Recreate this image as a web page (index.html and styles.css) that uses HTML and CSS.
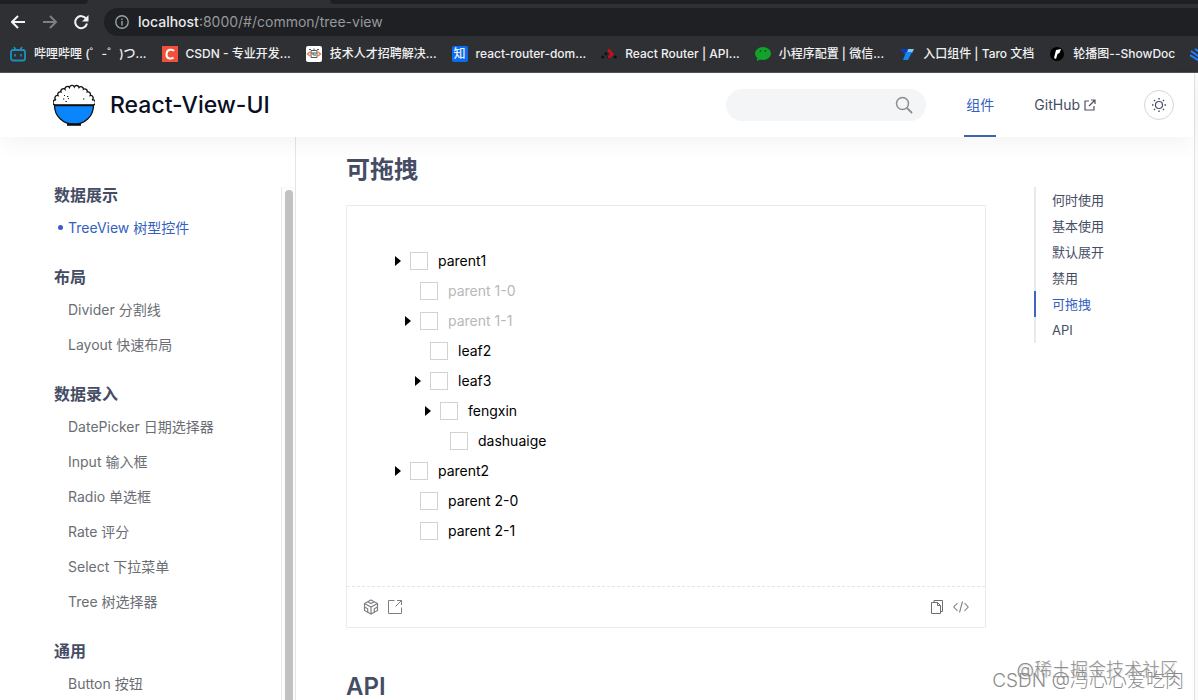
FILE: index.html
```html
<!DOCTYPE html>
<html lang="zh-CN">
<head>
<meta charset="utf-8">
<title>React-View-UI</title>
<link rel="stylesheet" href="styles.css">
</head>
<body>
<div class="browser">
  <div class="tab-edge"><span class="tab-left"></span><span class="tab-right"></span></div>
  <div class="toolbar">
    <button class="tool" aria-label="Back"><svg width="16" height="16" viewBox="0 0 16 16"><path d="M14 8H1M7 2L1 8l6 6" stroke="#f1f3f4" stroke-width="2" fill="none"/></svg></button>
    <button class="tool" aria-label="Forward"><svg width="16" height="16" viewBox="0 0 16 16"><path d="M1 8h13M8 2l6 6-6 6" stroke="#7d7f82" stroke-width="2" fill="none"/></svg></button>
    <button class="tool" aria-label="Reload"><svg width="16" height="16" viewBox="0 0 16 16"><path d="M13.3 5A6 6 0 1 0 14 9.5" stroke="#f1f3f4" stroke-width="2" fill="none"/><path d="M15.500 1v6.500H9z" fill="#f1f3f4"/></svg></button>
    <div class="address">
      <svg width="14" height="14" viewBox="0 0 14 14"><circle cx="7" cy="7" r="6.2" stroke="#9aa0a6" stroke-width="1.4" fill="none"/><path d="M7 6v4.4M7 3.4v1.5" stroke="#9aa0a6" stroke-width="1.4"/></svg>
      <span class="url"><b>localhost</b>:8000/#/common/tree-view</span>
    </div>
  </div>
  <nav class="bookmarks">
    <a href="#"><svg width="16" height="16" viewBox="0 0 16 16"><rect x="1" y="4" width="14" height="10.5" rx="2" fill="none" stroke="#1c8fbe" stroke-width="1.8"/><path d="M4 1l2 3M12 1l-2 3M5 8v2.5M11 8v2.5" stroke="#1c8fbe" stroke-width="1.6"/></svg><span>哔哩哔哩 (゜-゜)つ...</span></a>
    <a href="#"><svg width="16" height="16" viewBox="0 0 16 16"><rect width="16" height="16" fill="#f1503a"/><path d="M12 5C10.800 3.300 5 2.300 4.500 8c-.4 5.300 4.500 5.200 7 3.500" stroke="#fff" stroke-width="2" fill="none"/></svg><span>CSDN - 专业开发...</span></a>
    <a href="#"><svg width="16" height="16" viewBox="0 0 16 16"><rect width="16" height="16" rx="2" fill="#fff"/><path d="M5 4.500h6v7H5zM5 7h6M7 7v2h3M3 3.500h2M11 3.500h2M8 2.500v2" stroke="#555" fill="none"/><path d="M4 6L1.500 8 4 10M12 6l2.500 2L12 10" stroke="#ee7f45" stroke-width="1.500" fill="none"/></svg><span>技术人才招聘解决...</span></a>
    <a href="#"><span class="zhi">知</span><span>react-router-dom...</span></a>
    <a href="#"><svg width="16" height="16" viewBox="0 0 16 16"><g fill="#111"><circle cx="1.800" cy="11" r="1.600"/><circle cx="5" cy="7.800" r="1.600"/><circle cx="14.200" cy="11" r="1.600"/><circle cx="8" cy="11" r="1.600"/></g><path d="M8 4.500l3 3.500-2.500 3" stroke="#c5101c" stroke-width="3" stroke-linecap="round" fill="none"/></svg><span>React Router | API...</span></a>
    <a href="#"><svg width="16" height="16" viewBox="0 0 16 16"><ellipse cx="8" cy="7.500" rx="8" ry="6.500" fill="#12a32a"/><path d="M2 12v3l4-2z" fill="#12a32a"/><circle cx="5.500" cy="5" r=".9" fill="#075c16"/><circle cx="10.500" cy="5" r=".9" fill="#075c16"/></svg><span>小程序配置 | 微信...</span></a>
    <a href="#"><svg width="16" height="16" viewBox="0 0 16 16"><path d="M1 3h7l1 6H6z" fill="#0b3db8"/><path d="M9 3h6l-2 4H8z" fill="#7cc8fb"/><path d="M7 6h6L9 14H4z" fill="#1687ee"/></svg><span>入口组件 | Taro 文档</span></a>
    <a href="#"><svg width="16" height="16" viewBox="0 0 16 16"><circle cx="8" cy="8" r="7" fill="#000"/><path d="M7 4l5-1-1.500 4-2 1-1.500 5-2-1 1-4z" fill="#fff"/></svg><span>轮播图--ShowDoc</span></a>
    <a href="#" aria-label="掘金"><svg width="16" height="16" viewBox="0 0 16 16"><path d="M0 9l8 5 8-5M1 5l7 5 7-5M5 3l3 2 3-2" stroke="#1e80ff" stroke-width="2" fill="none"/></svg></a>
  </nav>
</div>

<div class="viewport">
  <div class="site">
    <header class="site-header">
      <a class="brand" href="#">
        <svg width="42" height="42" viewBox="0 0 42 42"><path d="M2 21a2.500 2.500 0 0 1 1-5 2.500 2.500 0 0 1 2-4.500 2.500 2.500 0 0 1 3-3.500 2.500 2.500 0 0 1 4-2.700 2.500 2.500 0 0 1 4.500-1.800 2.500 2.500 0 0 1 4.800-.6 2.500 2.500 0 0 1 4.700.6 2.500 2.500 0 0 1 4.400 1.800 2.500 2.500 0 0 1 3.800 2.700 2.500 2.500 0 0 1 3 3.500 2.500 2.500 0 0 1 1.900 4.500 2.500 2.500 0 0 1 1.400 5z" fill="#fff" stroke="#111" stroke-width="1.300"/><path d="M1.500 21.500h39C40.500 32 32 40.300 21 40.300S1.500 32 1.500 21.500z" fill="#0a85fb" stroke="#111" stroke-width="1.300"/><path d="M14 40.500h14" stroke="#111" stroke-width="2.600"/><path d="M10 15h1.300M14 12.500h1.300M12.500 17.500h1.300M30 15h1.300M11 11.500h1M15 14.500h1" stroke="#111" stroke-width="1.100"/></svg>
        <span>React-View-UI</span>
      </a>
      <div class="header-tools">
        <label class="search"><input type="text" aria-label="搜索"><svg width="18" height="18" viewBox="0 0 18 18"><circle cx="7.500" cy="7.500" r="6" stroke="#8b8e92" stroke-width="1.500" fill="none"/><path d="M12 12l5 5" stroke="#8b8e92" stroke-width="1.800"/></svg></label>
        <nav class="main-nav">
          <a class="active" href="#">组件</a>
          <a href="#">GitHub<svg width="12" height="12" viewBox="0 0 12 12"><path d="M5 2H1v9h9V7M7 1h4v4M11 1L5 7" stroke="#4d5164" stroke-width="1.200" fill="none"/></svg></a>
        </nav>
        <button class="theme" aria-label="主题"><svg width="16" height="16" viewBox="0 0 16 16"><circle cx="8" cy="8" r="3.500" stroke="#454d64" stroke-width="1.200" fill="none"/><path d="M8 1v1.500M8 13.500V15M1 8h1.500M13.500 8H15M3 3l1 1M12 12l1 1M13 3l-1 1M4 12l-1 1" stroke="#454d64" stroke-width="1.400"/></svg></button>
      </div>
    </header>
    <div class="body">
      <aside class="sidebar">
        <nav class="menu">
          <section><h2>数据展示</h2><a class="active" href="#">TreeView 树型控件</a></section>
          <section><h2>布局</h2><a href="#">Divider 分割线</a><a href="#">Layout 快速布局</a></section>
          <section><h2>数据录入</h2><a href="#">DatePicker 日期选择器</a><a href="#">Input 输入框</a><a href="#">Radio 单选框</a><a href="#">Rate 评分</a><a href="#">Select 下拉菜单</a><a href="#">Tree 树选择器</a></section>
          <section><h2>通用</h2><a href="#">Button 按钮</a></section>
        </nav>
        <div class="scroll-track"><div class="scroll-thumb"></div></div>
      </aside>
      <main class="content">
        <h1>可拖拽</h1>
        <div class="card">
          <ul class="tree">
            <li><div class="row"><button class="arrow" aria-label="展开"></button><label><input type="checkbox">parent1</label></div>
              <ul>
                <li><div class="row disabled"><i class="arrow-space"></i><label><input type="checkbox" disabled>parent 1-0</label></div></li>
                <li><div class="row disabled"><button class="arrow" aria-label="展开"></button><label><input type="checkbox" disabled>parent 1-1</label></div>
                  <ul>
                    <li><div class="row"><i class="arrow-space"></i><label><input type="checkbox">leaf2</label></div></li>
                    <li><div class="row"><button class="arrow" aria-label="展开"></button><label><input type="checkbox">leaf3</label></div>
                      <ul>
                        <li><div class="row"><button class="arrow" aria-label="展开"></button><label><input type="checkbox">fengxin</label></div>
                          <ul><li><div class="row"><i class="arrow-space"></i><label><input type="checkbox">dashuaige</label></div></li></ul>
                        </li>
                      </ul>
                    </li>
                  </ul>
                </li>
              </ul>
            </li>
            <li><div class="row"><button class="arrow" aria-label="展开"></button><label><input type="checkbox">parent2</label></div>
              <ul>
                <li><div class="row"><i class="arrow-space"></i><label><input type="checkbox">parent 2-0</label></div></li>
                <li><div class="row"><i class="arrow-space"></i><label><input type="checkbox">parent 2-1</label></div></li>
              </ul>
            </li>
          </ul>
          <div class="actions">
            <button aria-label="CodeSandbox"><svg width="16" height="16" viewBox="0 0 16 16"><path d="M8 1l6.500 3.500v7L8 15l-6.500-3.500v-7zM1.500 4.500L8 8l6.500-3.500M8 8v7M4.700 2.800L8 4.600l3.300-1.800M1.500 8l3.200 1.800v3.400M14.500 8l-3.200 1.800v3.400" stroke="#7c8085" stroke-width="1.200" fill="none"/></svg></button>
            <button aria-label="新窗口打开"><svg width="16" height="16" viewBox="0 0 16 16"><path d="M7.500 1.500h-6v13h13v-6M10 1.500h4.500V6M14.500 1.500L8.500 7.500" stroke="#7c8085" fill="none"/></svg></button>
            <span class="spacer"></span>
            <button aria-label="复制"><svg width="16" height="16" viewBox="0 0 16 16"><path d="M2.500 3.500h6l3 3v8h-9zM8.500 3.500v3h3M5 3.500v-2h8.500v11h-2" stroke="#6c7075" fill="none"/></svg></button>
            <button aria-label="显示代码"><svg width="16" height="16" viewBox="0 0 16 16"><path d="M4.500 4L.8 8l3.700 4M11.500 4l3.700 4-3.700 4M9.500 2.500l-3 11" stroke="#7c8085" stroke-width="1.100" fill="none"/></svg></button>
          </div>
        </div>
        <h1 class="next">API</h1>
      </main>
      <nav class="toc">
        <a href="#">何时使用</a><a href="#">基本使用</a><a href="#">默认展开</a><a href="#">禁用</a><a class="active" href="#">可拖拽</a><a href="#">API</a>
      </nav>
    </div>
  </div>
  <div class="page-scroll"></div>
</div>
<div class="mark mark-top">@稀土掘金技术社区</div>
<div class="mark mark-bottom">CSDN @冯心心爱吃肉</div>
</body>
</html>
```
FILE: styles.css
```css
* { box-sizing: border-box; }
body {
  margin: 0;
  height: 100vh;
  display: flex;
  flex-direction: column;
  overflow: hidden;
  position: relative;
  background: #fff;
  color: #454d64;
  font: 14px/20px Inter, "Noto Sans CJK SC", sans-serif;
}
a { color: inherit; text-decoration: none; }
button { border: 0; padding: 0; background: none; display: flex; align-items: center; justify-content: center; }
svg { display: block; flex: none; }

.browser { flex: none; background: #2f3034; border-bottom: 1px solid #515156; }
.tab-edge { display: flex; justify-content: space-between; height: 4px; }
.tab-left { width: 88px; background: #1e1f22; border-radius: 0 0 6px 0; }
.tab-right { width: 868px; background: #1e1f22; border-radius: 0 0 0 6px; }
.toolbar { display: flex; align-items: center; gap: 15px; height: 36px; padding-left: 11px; }
.tool { width: 16px; height: 16px; }
.address {
  flex: 1;
  display: flex;
  align-items: center;
  gap: 9px;
  height: 28px;
  padding-left: 11px;
  background: #1f2023;
  border-radius: 14px 0 0 14px;
}
.url { color: #96999d; }
.url b { color: #e9eaed; font-weight: 500; }
.bookmarks { display: flex; align-items: center; gap: 15px; height: 32px; padding: 0 0 4px 10px; overflow: hidden; }
.bookmarks a { flex: none; display: flex; align-items: center; gap: 8px; color: #eff0f2; font-size: 12px; font-weight: 500; white-space: nowrap; }
.zhi { width: 16px; height: 16px; border-radius: 2px; background: #0a6cf5; line-height: 16px; text-align: center; }

.viewport { flex: 1; min-height: 0; display: flex; }
.site { flex: 1; min-width: 0; display: flex; flex-direction: column; }
.page-scroll { width: 4px; background: #fafafa; border-left: 1px solid #e2e2e2; }
.site-header {
  flex: none;
  display: flex;
  align-items: center;
  justify-content: space-between;
  height: 64px;
  padding: 0 20px 0 53px;
  background: #fff;
  box-shadow: 0 8px 24px -2px rgba(0, 0, 0, 0.05);
  position: relative;
}
.brand { display: flex; align-items: center; gap: 15px; color: #0a0f24; font-size: 23px; font-weight: 500; line-height: 32px; }
.header-tools { display: flex; align-items: center; align-self: stretch; }
.search { display: flex; align-items: center; width: 200px; height: 32px; padding: 0 13px 0 16px; border-radius: 16px; background: #f4f5f6; }
.search input { flex: 1; min-width: 0; border: 0; background: none; outline: 0; font: inherit; }
.main-nav { display: flex; align-self: stretch; gap: 38px; margin: 0 48px 0 38px; }
.main-nav a { display: flex; align-items: center; gap: 4px; border: solid transparent; border-width: 2px 0; }
.main-nav .active { padding: 0 2px; color: #3460c0; border-bottom-color: #3f64ad; }
.theme { width: 30px; height: 30px; border: 1px solid #d4d5da; border-radius: 50%; }

.body { flex: 1; min-height: 0; display: flex; }
.sidebar { flex: none; width: 296px; display: flex; padding-top: 46px; border-right: 1px solid #e4e5e8; }
.menu { flex: 1; padding-left: 54px; overflow: hidden; }
.menu section { margin-bottom: 20px; }
.menu h2 { margin: 0 0 3px; font-size: 16px; line-height: 24px; font-weight: 600; }
.menu a { display: flex; align-items: center; height: 35px; padding-left: 14px; color: #6a6e74; }
.menu .active { padding-left: 4px; gap: 5px; color: #3460c0; }
.menu .active::before { content: ""; width: 5px; height: 5px; border-radius: 50%; background: currentColor; }
.scroll-track { width: 14px; margin-top: 4px; padding: 3px 2px 0 3px; border-left: 1px solid #e8e8e8; background: #fcfcfc; }
.scroll-thumb { height: 100%; border-radius: 4px 4px 0 0; background: #c1c1c1; }

.content { flex: 1; min-width: 0; padding: 17px 0 0 50px; overflow: hidden; }
.content h1 { margin: 0 0 19px; font-size: 24px; line-height: 32px; font-weight: 600; }
.content .next { margin-top: 43px; }
.card { border: 1px solid #ebebed; border-radius: 1px; }
.tree, .tree ul { margin: 0; padding: 0; list-style: none; }
.tree { padding: 40px 48px; color: #000; }
.tree ul { padding-left: 10px; }
.row { display: flex; align-items: center; height: 30px; }
.row label { display: flex; align-items: center; gap: 10px; line-height: 22px; }
.row input { appearance: none; width: 18px; height: 18px; margin: 0; border: 1px solid #d2d2d2; background: #fff; }
.disabled label { color: #b8b8b8; }
.arrow { width: 6px; height: 10px; margin-right: 9px; background: #000; clip-path: polygon(0 0, 100% 50%, 0 100%); }
.arrow-space { width: 15px; }
.actions { display: flex; align-items: center; gap: 8px; height: 41px; padding: 0 16px; border-top: 1px dashed #e4e5e8; }
.spacer { flex: 1; }

.toc { flex: none; width: 160px; margin-left: 48px; padding-top: 50px; }
.toc a { display: block; padding-left: 16px; border-left: 2px solid #e9eaed; font-size: 13px; line-height: 26px; }
.toc .active { color: #3460c0; border-color: #3f64c5; }

.mark { position: absolute; color: #8c8c8c; font-weight: 300; white-space: nowrap; pointer-events: none; }
.mark-top { right: 20px; bottom: 18px; font-size: 18px; line-height: 24px; text-shadow: 1px 1px 1px #ddd; }
.mark-bottom { right: 14px; bottom: 6px; font-size: 19px; line-height: 26px; }
```
